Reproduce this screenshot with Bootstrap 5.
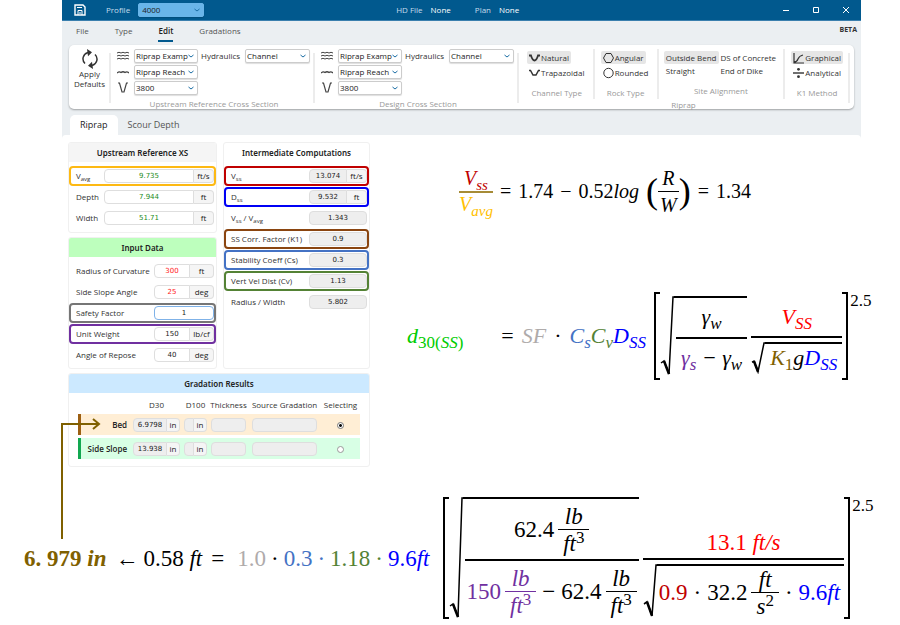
<!DOCTYPE html>
<html lang="en">
<head>
<meta charset="utf-8">
<meta name="viewport" content="width=device-width, initial-scale=1">
<title>Riprap sizing</title>
<link rel="stylesheet" href="https://cdn.jsdelivr.net/npm/bootstrap@5.3.0/dist/css/bootstrap.min.css">
<script src="https://cdn.jsdelivr.net/npm/bootstrap@5.3.0/dist/js/bootstrap.bundle.min.js"></script>
<style>
body{font-family:"Open Sans","Noto Sans",sans-serif;font-size:8px;line-height:12px;color:#333;background:#fff;overflow-x:hidden}
.app-shell{margin:0 39px 0 62px}
/* title bar */
.title-bar{background:#01598e;height:21px;border-bottom:1px solid #3a7fae;color:#c5dcec;padding-left:12px}
.title-bar b{font-weight:400;color:#fff}
.title-bar .save-ico{margin-right:20px}
.title-bar .form-select{width:66px;padding-left:3px;margin-left:8px;margin-right:192px;background-color:#69b5e9;border-color:#69b5e9}
.win-btn{border:0;background:none;padding:0;width:30px;line-height:0}
/* menu */
.head-zone{background:#ebeff2}
.menu-bar{height:24px;padding:0 4px 0 14px}
.menu-links{gap:26px}
.menu-bar a{color:#555;text-decoration:none;line-height:19px;border-bottom:2px solid transparent}
.menu-bar a.on{color:#222;font-weight:600;border-color:#01598e}
.beta{font-size:7px;font-weight:700;line-height:10px}
/* ribbon */
.ribbon{margin:0 7px;height:64px;background:#fff;border-radius:5px;box-shadow:0 1px 2px #0005;padding:4px 0 0 5px}
.apply-btn{border:0;background:none;padding:0;width:31px;line-height:10px;color:#333;font-size:8px}
.rule{width:2px;background:#ececec;margin:4px 0 6px}
.form-select{font-size:8px;line-height:12px;height:14px;min-height:14px;padding:0 9px 0 1px;border:1px solid #ccc;border-radius:2px;color:#222;
 background-image:url("data:image/svg+xml,%3csvg xmlns='http://www.w3.org/2000/svg' viewBox='0 0 8 8'%3e%3cpath fill='none' stroke='%231b6ea5' d='M1.5 3l2.5 2 2.5-2'/%3e%3c/svg%3e");background-size:8px 8px;background-position:right 2px center;text-overflow:clip;box-shadow:0 1px 1px #0002}
.xs-group{width:202px;padding:0 2px 0 6px}
.xs-grid{display:grid;grid-template-columns:14px 64px 41px 65px;column-gap:3px;row-gap:2px;align-items:center}
.group-name{color:#999;text-align:center;white-space:nowrap;line-height:12px}
.xs-group .group-name{margin-top:3px}
.opt{border:0;background:none;padding:0 2px;height:13px;line-height:12px;border-radius:2px;color:#333;font-size:8px;white-space:nowrap;display:flex;align-items:center;gap:1px}
.opt.on{background:#e6e6e6}
.opt-group{padding:2px 5px 0}
.opt-group .opt+.opt{margin-top:2px}
/* tabs */
.tab-row{padding:6px 0 0 8px}
.tab-row a{font-size:9px;line-height:20px;color:#555;text-decoration:none;padding:0 10px;border-radius:5px 5px 0 0}
.tab-row a.on{background:#fff;color:#222}
.tab-edge{height:4px;background:#fff;border-radius:5px 5px 0 0}
/* panels */
.panels{width:302px;margin-left:68px;padding-top:3px}
.col-left{width:149px;gap:4px}
.col-mid{width:147px}
.pane{border:1px solid #f0f0f0;border-radius:3px;background:#fff}
.pane h2{font-family:"Noto Sans",sans-serif;font-size:8px;line-height:19px;font-weight:600;color:#222;text-align:center;margin:0;border-radius:2px 2px 0 0}
.bg-xs{background:#f5f5f5}.bg-in{background:#bdffbd}.bg-gr{background:#cce9ff}
.field{height:20px;border:2px solid transparent;border-radius:4px;padding:0 0 0 5px;margin-bottom:1px;display:flex;align-items:center;justify-content:space-between}
.field label{white-space:nowrap}
.field sub{font-size:6px;bottom:-2px}
.b-gold{border-color:#fdb913}.b-grey{border-color:#767676}.b-purple{border-color:#7030a0}.b-red{border-color:#c00000}.b-blue{border-color:#0000f5}.b-brown{border-color:#8a4510}.b-sky{border-color:#4472c4}.b-green{border-color:#548235}
.input-group{height:14px;flex-wrap:nowrap}
.w-xs{width:110px}.w-in{width:60px}.w-ic{width:58px}
.form-control{font-family:"DejaVu Sans",sans-serif;font-size:7px;line-height:12px;height:14px;min-height:14px;padding:0;text-align:center;border:1px solid #dedede;border-radius:4px;color:#222;background:#fff}
.form-control[readonly]{background:#eee}
.input-group-text{font-size:8px;line-height:12px;padding:0;width:21px;justify-content:center;border:1px solid #dedede;border-left-color:#f5f5f5;border-radius:4px;background:#f5f5f5;color:#222}
.w-in .input-group-text{width:25px}
.t-green{color:#1c8c1c}.t-red{color:#f22}
.form-control.editing{border-color:#7fb2e8}
/* gradation table */
.grad{border-collapse:separate;border-spacing:0 3px;margin:3px 9px 4px;width:282px;table-layout:fixed}
.grad th,.grad td{padding:0 2px;text-align:center;font-weight:400;white-space:nowrap}
.grad thead th{line-height:12px;overflow:visible;padding:0}
.grad tbody>tr>*{height:21px;vertical-align:middle}
.grad tbody th{font-weight:600;text-align:right;padding-right:4px;color:#222}
.r-bed>*{background:#ffeed5}.r-side>*{background:#d8ffe5}
.r-bed th{border-left:3px solid #9c5f12}.r-side th{border-left:3px solid #12a850}
.grad .input-group-text{width:14px}
.form-check-input{width:7px;height:7px;margin:0;border:1px solid #999;float:none;vertical-align:middle}
.form-check-input:checked{background-color:#fff;border-color:#777;background-image:radial-gradient(#111 38%,#fff 42%)}
/* formulas */
.formula{font-family:"Liberation Serif",serif;color:#000;line-height:1;display:flex;align-items:center;white-space:nowrap}
.formula sub,.formula sup{font-size:17px;line-height:0}
.formula sub{bottom:-5px}.formula sup{top:-8px}
.formula sup,.up{font-style:normal}
.f1{font-size:20px;gap:7px;margin:28px 0 0 81px}
.f1 sub{font-size:15px}
.f2{font-size:22px;gap:8px;margin:77px 0 0 29px}
.f3{font-size:23px;gap:5px;margin:30px 0 0 24px}
.frac{display:inline-grid;grid-template-rows:1fr 1fr;text-align:center}
.num{align-self:end;padding:0 2px 4px}
.den{align-self:start;border-top:2px solid currentColor;padding:4px 2px 0}
.unit .num{padding:0 3px 1px}
.unit .den{padding:2px 5px 0;border-top-width:1px}
.tall .num{padding-bottom:9px}
.tall .den{padding:8px 5px 0}
.root{display:flex;align-items:stretch}
.root>svg{width:14px;height:auto;flex:none}
.root>.under{border-top:2px solid #000;display:flex;align-items:center;padding-left:2px}
.under.slim{display:block;padding:3px 5px 5px 5px}
.bracketed{display:flex;align-items:stretch}
.brk{width:6px;border:2px solid #000;flex:none}
.brk.l{border-right:0}.brk.r{border-left:0}
.power{align-self:flex-start;font-size:17px;margin-left:2px}
.paren{font-size:36px;line-height:36px}
.f1 .num{padding-bottom:3px}
.f1 .den{border-top-width:1px;padding-top:3px}
.f1 .vel>.num,.f1 .vel>.den{padding-left:0;padding-right:0}
.f1 .vel>.den{border-top:2px solid #a68b36;padding-top:1px}
.gap-id{margin-right:30px}
.minus{margin:0 6px}
.dot-gap{margin:0 6px}
.c-red{color:#c00000}.c-hot{color:#f00}.c-gold{color:#ffc000}.c-lime{color:#0c0}.c-grey{color:#afabab}.c-sky{color:#4472c4}.c-green{color:#548235}.c-blue{color:#00f}.c-purple{color:#7030a0}.c-olive{color:#7f6000}
.callout{position:absolute;left:60px;top:417px;pointer-events:none}
</style>
</head>
<body>
<div class="position-relative">
<div class="app-shell head-zone">
  <header class="title-bar d-flex align-items-center">
    <svg class="save-ico" width="12" height="12" viewBox="0 0 12 12" fill="none" stroke="#fff"><path d="M1 1h8l2 2v8H1z" stroke-width="1.4"/><path d="M3 3.5h5M4 11V6.5h4V11M6 8v2"/></svg>
    <label for="profile">Profile</label>
    <select id="profile" class="form-select"><option>4000</option></select>
    <span>HD File</span><b class="ms-2">None</b>
    <span class="ms-4">Plan</span><b class="ms-2">None</b>
    <div class="d-flex ms-auto">
      <button class="win-btn" aria-label="Minimize"><svg width="8" height="8" stroke="#fff"><path d="M1 4.500h6"/></svg></button>
      <button class="win-btn" aria-label="Maximize"><svg width="8" height="8" stroke="#fff" fill="none"><path d="M1.500 1.500h5v5h-5z"/></svg></button>
      <button class="win-btn" aria-label="Close"><svg width="8" height="8" stroke="#fff"><path d="M1 1l6 6M7 1L1 7"/></svg></button>
    </div>
  </header>
  <nav class="menu-bar d-flex align-items-start justify-content-between">
    <div class="d-flex menu-links"><a href="#">File</a><a href="#">Type</a><a href="#" class="on">Edit</a><a href="#">Gradations</a></div>
    <span class="beta mt-1">BETA</span>
  </nav>
  <section class="ribbon d-flex">
    <button class="apply-btn align-self-start me-1"><svg class="d-block mx-auto" width="18" height="20" viewBox="0 0 18 20" fill="none" stroke="#333" stroke-width="1.500"><path d="M7 3.500A6.500 6.500 0 0 0 4 14.500M11 16.500A6.500 6.500 0 0 0 14 5.500"/><path fill="#333" stroke="none" d="M6 0l5 3.300-4 4zM12 20l-5-3.300 4-4z"/></svg><span class="d-block">Apply</span><span class="d-block">Defaults</span></button>
    <span class="rule"></span>
    <div class="xs-group">
      <div class="xs-grid">
        <svg width="12" height="10" fill="none" stroke="#444"><path d="M0 2q2-1.500 4 0 2-1.500 4 0 2-1.500 4 0M0 5q2-1.500 4 0 2-1.500 4 0 2-1.500 4 0M0 8q2-1.500 4 0 2-1.500 4 0 2-1.500 4 0"/></svg>
        <select class="form-select" aria-label="Upstream river"><option>Riprap Example</option></select>
        <label for="hy1">Hydraulics</label><select id="hy1" class="form-select"><option>Channel</option></select>
        <svg width="12" height="6" fill="none" stroke="#444" stroke-width="1.300"><path d="M0 4q2-1.800 4-.5 2-1.500 4 0 2-1.500 4 .5"/></svg>
        <select class="form-select" aria-label="Upstream reach"><option>Riprap Reach</option></select><i></i><i></i>
        <svg width="12" height="12" fill="none" stroke="#444" stroke-width="1.200"><path d="M1 1h1.500l2.500 9h2l2.500-9H11"/></svg>
        <select class="form-select" aria-label="Upstream station"><option>3800</option></select>
      </div>
      <div class="group-name">Upstream Reference Cross Section</div>
    </div>
    <span class="rule"></span>
    <div class="xs-group">
      <div class="xs-grid">
        <svg width="12" height="10" fill="none" stroke="#444"><path d="M0 2q2-1.500 4 0 2-1.500 4 0 2-1.500 4 0M0 5q2-1.500 4 0 2-1.500 4 0 2-1.500 4 0M0 8q2-1.500 4 0 2-1.500 4 0 2-1.500 4 0"/></svg>
        <select class="form-select" aria-label="Design river"><option>Riprap Example</option></select>
        <label for="hy2">Hydraulics</label><select id="hy2" class="form-select"><option>Channel</option></select>
        <svg width="12" height="6" fill="none" stroke="#444" stroke-width="1.300"><path d="M0 4q2-1.800 4-.5 2-1.500 4 0 2-1.500 4 .5"/></svg>
        <select class="form-select" aria-label="Design reach"><option>Riprap Reach</option></select><i></i><i></i>
        <svg width="12" height="12" fill="none" stroke="#444" stroke-width="1.200"><path d="M1 1h1.500l2.500 9h2l2.500-9H11"/></svg>
        <select class="form-select" aria-label="Design station"><option>3800</option></select>
      </div>
      <div class="group-name">Design Cross Section</div>
    </div>
    <span class="rule"></span>
    <div class="d-flex flex-column flex-grow-1">
      <div class="d-flex justify-content-between">
        <div class="opt-group ps-2">
          <button class="opt on"><svg width="11" height="8" fill="none" stroke="#333" stroke-width="1.800"><path d="M0 1.500h2q1.500 5 3.500 5t3.500-5h2"/></svg>Natural</button>
          <button class="opt"><svg width="11" height="8" fill="none" stroke="#333" stroke-width="1.500"><path d="M0 1.500h1.500l2.500 4.500h3L9.500 1.500H11"/></svg>Trapazoidal</button>
          <div class="group-name mt-2">Channel Type</div>
        </div><span class="rule my-0"></span>
        <div class="opt-group">
          <button class="opt on"><svg width="11" height="12" fill="none" stroke="#333"><path d="M3 1.500h5L10.500 6 8 10.500H3L.5 6z"/></svg>Angular</button>
          <button class="opt"><svg width="11" height="12" fill="none" stroke="#333"><circle cx="5.500" cy="6" r="4.700"/></svg>Rounded</button>
          <div class="group-name mt-2">Rock Type</div>
        </div><span class="rule my-0"></span>
        <div class="opt-group px-1">
          <div class="d-flex">
            <div><button class="opt on">Outside Bend</button><button class="opt mt-0">Straight</button></div>
            <div><button class="opt">DS of Concrete</button><button class="opt mt-0">End of Dike</button></div>
          </div>
          <div class="group-name mt-2">Site Alignment</div>
        </div><span class="rule my-0"></span>
        <div class="opt-group">
          <button class="opt on"><svg width="11" height="12" fill="none" stroke="#333"><path d="M1 1v10h10M1 10q3 0 4-3t5-4" stroke-width="1.200"/></svg>Graphical</button>
          <button class="opt"><svg width="11" height="12" fill="#333"><path d="M0 5.300h11v1.400H0z"/><circle cx="5.500" cy="2.300" r="1.400"/><circle cx="5.500" cy="9.700" r="1.400"/></svg>Analytical</button>
          <div class="group-name mt-2">K1 Method</div>
        </div>
      </div>
      <div class="group-name">Riprap</div>
    </div>
    <span class="rule me-1"></span>
  </section>
  <nav class="tab-row d-flex"><a href="#" class="on">Riprap</a><a href="#">Scour Depth</a></nav>
  <div class="tab-edge"></div>
</div>

<main class="d-flex align-items-start">
  <div class="panels flex-shrink-0">
    <div class="d-flex align-items-stretch justify-content-between">
      <div class="col-left d-flex flex-column">
        <section class="pane">
          <h2 class="bg-xs">Upstream Reference XS</h2>
          <div class="pt-1 pb-1">
            <div class="field b-gold"><label for="vavg">V<sub>avg</sub></label><div class="input-group w-xs"><input id="vavg" class="form-control t-green" value="9.735"><span class="input-group-text">ft/s</span></div></div>
            <div class="field"><label for="dep">Depth</label><div class="input-group w-xs"><input id="dep" class="form-control t-green" value="7.944"><span class="input-group-text">ft</span></div></div>
            <div class="field mb-0"><label for="wid">Width</label><div class="input-group w-xs"><input id="wid" class="form-control t-green" value="51.71"><span class="input-group-text">ft</span></div></div>
          </div>
        </section>
        <section class="pane flex-grow-1">
          <h2 class="bg-in">Input Data</h2>
          <div class="pt-1">
            <div class="field"><label for="roc">Radius of Curvature</label><div class="input-group w-in"><input id="roc" class="form-control t-red" value="300"><span class="input-group-text">ft</span></div></div>
            <div class="field"><label for="ssa">Side Slope Angle</label><div class="input-group w-in"><input id="ssa" class="form-control t-red" value="25"><span class="input-group-text">deg</span></div></div>
            <div class="field b-grey"><label for="sf">Safety Factor</label><div class="input-group w-in"><input id="sf" class="form-control editing" value="1"></div></div>
            <div class="field b-purple"><label for="uw">Unit Weight</label><div class="input-group w-in"><input id="uw" class="form-control" value="150"><span class="input-group-text">lb/cf</span></div></div>
            <div class="field"><label for="aor">Angle of Repose</label><div class="input-group w-in"><input id="aor" class="form-control" value="40"><span class="input-group-text">deg</span></div></div>
          </div>
        </section>
      </div>
      <section class="pane col-mid">
        <h2>Intermediate Computations</h2>
        <div class="pt-1 pb-5">
          <div class="field b-red"><label for="vss">V<sub>ss</sub></label><div class="input-group w-ic"><input id="vss" readonly class="form-control" value="13.074"><span class="input-group-text">ft/s</span></div></div>
          <div class="field b-blue"><label for="dss">D<sub>ss</sub></label><div class="input-group w-ic"><input id="dss" readonly class="form-control" value="9.532"><span class="input-group-text">ft</span></div></div>
          <div class="field"><label for="vr">V<sub>ss</sub> / V<sub>avg</sub></label><div class="input-group w-ic"><input id="vr" readonly class="form-control" value="1.343"></div></div>
          <div class="field b-brown"><label for="k1">SS Corr. Factor (K1)</label><div class="input-group w-ic"><input id="k1" readonly class="form-control" value="0.9"></div></div>
          <div class="field b-sky"><label for="cs">Stability Coeff (Cs)</label><div class="input-group w-ic"><input id="cs" readonly class="form-control" value="0.3"></div></div>
          <div class="field b-green"><label for="cv">Vert Vel Dist (Cv)</label><div class="input-group w-ic"><input id="cv" readonly class="form-control" value="1.13"></div></div>
          <div class="field mb-2"><label for="rw">Radius / Width</label><div class="input-group w-ic"><input id="rw" readonly class="form-control" value="5.802"></div></div>
        </div>
      </section>
    </div>
    <section class="pane mt-1">
      <h2 class="bg-gr">Gradation Results</h2>
      <table class="grad">
        <colgroup><col style="width:53px"><col style="width:51px"><col style="width:27px"><col style="width:39px"><col style="width:73px"><col></colgroup>
        <thead><tr><th></th><th>D30</th><th>D100</th><th>Thickness</th><th>Source Gradation</th><th>Selecting</th></tr></thead>
        <tbody>
          <tr class="r-bed"><th scope="row">Bed</th><td><div class="input-group"><input aria-label="Bed D30" readonly class="form-control" value="6.9798"><span class="input-group-text">in</span></div></td><td><div class="input-group"><input aria-label="Bed D100" readonly class="form-control"><span class="input-group-text">in</span></div></td><td><input aria-label="Bed thickness" readonly class="form-control"></td><td class="px-1"><input aria-label="Bed source gradation" readonly class="form-control"></td><td><input type="radio" name="sel" aria-label="Select bed" class="form-check-input" checked></td></tr>
          <tr class="r-side"><th scope="row">Side Slope</th><td><div class="input-group"><input aria-label="Side slope D30" readonly class="form-control" value="13.938"><span class="input-group-text">in</span></div></td><td><div class="input-group"><input aria-label="Side slope D100" readonly class="form-control"><span class="input-group-text">in</span></div></td><td><input aria-label="Side slope thickness" readonly class="form-control"></td><td class="px-1"><input aria-label="Side slope source gradation" readonly class="form-control"></td><td><input type="radio" name="sel" aria-label="Select side slope" class="form-check-input"></td></tr>
        </tbody>
      </table>
    </section>
  </div>

  <div class="flex-grow-1 ms-2">
    <div class="formula f1">
      <span class="frac vel"><i class="num c-red">V<sub>ss</sub></i><i class="den c-gold">V<sub>avg</sub></i></span>
      <span>=</span><span>1.74</span><span>−</span><span>0.52<i>log</i></span>
      <span class="d-flex align-items-center"><span class="paren">(</span><span class="frac"><i class="num">R</i><i class="den">W</i></span><span class="paren">)</span></span>
      <span>=</span><span>1.34</span>
    </div>
    <div class="formula f2">
      <i class="c-lime gap-id">d<sub><span class="up">30(</span>SS<span class="up">)</span></sub></i>
      <span>=</span><i class="c-grey">SF</i><span>·</span>
      <i><span class="c-sky">C<sub>s</sub></span><span class="c-green">C<sub>v</sub></span><span class="c-blue">D<sub>SS</sub></span></i>
      <span class="bracketed">
        <span class="brk l"></span>
        <span class="root mt-1 mb-1"><svg viewBox="0 0 14 80" preserveAspectRatio="none" fill="none" stroke="#000"><path d="M1 67l3-2 5 13L13 1h1" stroke-width="1.500"/><path d="M4 65l5 13" stroke-width="2.500"/></svg>
          <span class="under"><span class="frac tall"><i class="num">γ<sub>w</sub></i><i class="den"><span class="c-purple">γ<sub>s</sub></span> − γ<sub>w</sub></i></span></span></span>
        <span class="frac ms-1"><i class="num c-hot pb-2">V<sub>SS</sub></i><span class="den px-0"><span class="root"><svg viewBox="0 0 14 30" preserveAspectRatio="none" fill="none" stroke="#000"><path d="M1 19l2-1 4 10L13 1h1" stroke-width="1.500"/><path d="M3 18l4 10" stroke-width="2.500"/></svg><i class="under slim"><span class="c-olive">K<sub class="up">1</sub></span>g<span class="c-blue">D<sub>SS</sub></span></i></span></span></span>
        <span class="brk r"></span><span class="power">2.5</span>
      </span>
    </div>
  </div>
</main>

<div class="formula f3">
  <b class="c-olive me-1">6. 979 <i>in</i></b><span>←</span><span class="me-1">0.58 <i>ft</i></span><span class="me-2">=</span>
  <span class="c-grey">1.0</span><span>·</span><span class="c-sky">0.3</span><span class="c-sky">·</span><span class="c-green">1.18</span><span class="c-green">·</span><span class="c-blue">9.6<i>ft</i></span>
  <span class="bracketed ms-2">
    <span class="brk l"></span>
    <span class="root"><svg viewBox="0 0 14 122" preserveAspectRatio="none" fill="none" stroke="#000"><path d="M1 109l3-2 5 13L13 1h1" stroke-width="1.500"/><path d="M4 107l5 13" stroke-width="2.500"/></svg>
      <span class="under"><span class="frac"><span class="num d-flex align-items-center justify-content-center"><span>62.4</span><i class="frac unit ms-1"><span class="num">lb</span><span class="den">ft<sup>3</sup></span></i></span>
        <span class="den d-flex align-items-center"><span class="c-purple">150</span><i class="frac unit c-purple ms-1"><span class="num">lb</span><span class="den">ft<sup>3</sup></span></i><span class="minus">−</span><span>62.4</span><i class="frac unit ms-1"><span class="num">lb</span><span class="den">ft<sup>3</sup></span></i></span></span></span></span>
    <span class="frac ms-1"><span class="num c-hot">13.1 <i>ft/s</i></span><span class="den px-0"><span class="root"><svg viewBox="0 0 14 50" preserveAspectRatio="none" fill="none" stroke="#000"><path d="M1 37l3-2 5 13L13 1h1" stroke-width="1.500"/><path d="M4 35l5 13" stroke-width="2.500"/></svg><span class="under pe-1"><span class="c-red">0.9</span><span class="dot-gap">·</span><span>32.2</span><i class="frac unit ms-1"><span class="num">ft</span><span class="den">s<sup>2</sup></span></i><span class="dot-gap">·</span><span class="c-blue">9.6<i>ft</i></span></span></span></span></span>
    <span class="brk r"></span><span class="power">2.5</span>
  </span>
</div>
<svg class="callout" width="44" height="124" fill="none" stroke="#7f6000" stroke-width="2"><path d="M2 122V7h37M33 2l6 5-6 5"/></svg>
</div>
</body>
</html>
